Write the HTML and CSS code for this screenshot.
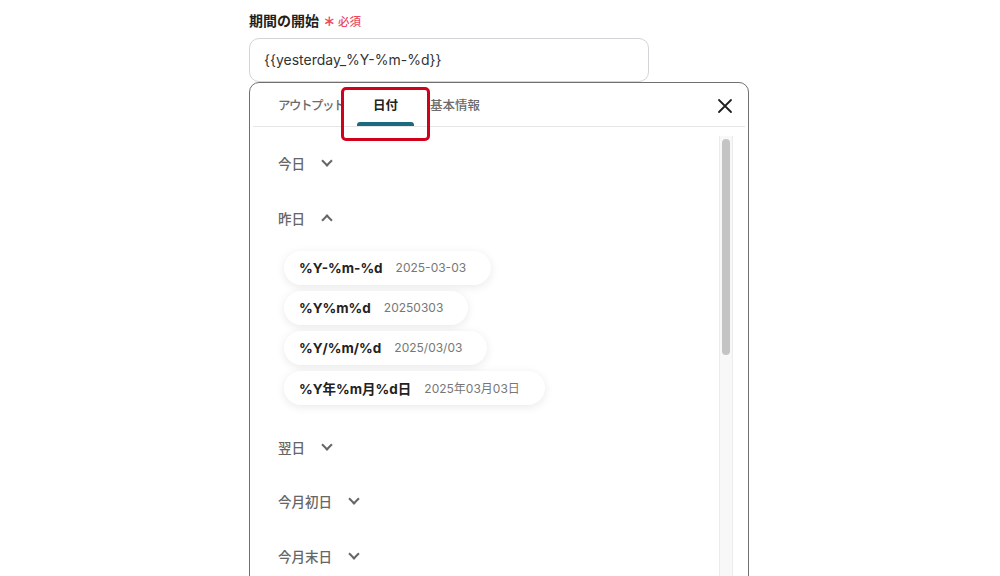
FILE: index.html
```html
<!DOCTYPE html>
<html lang="ja">
<head>
	<meta charset="UTF-8">
	<title>期間の開始</title>
	<link rel="stylesheet" href="styles.css">
</head>
<body>
	<div class="form">
		<label class="fieldLabel">期間の開始<span class="required"><span class="star">&lowast;</span>必須</span></label>
		<div class="field">
			<div class="fieldInput">{{yesterday_%Y-%m-%d}}</div>

			<div class="picker">
				<div class="pickerHead">
					<ul class="tabs">
						<li class="tab first">アウトプット</li>
						<li class="tab current">日付</li>
						<li class="tab">基本情報</li>
					</ul>
					<button class="closeBtn">
						<svg width="16" height="16" viewBox="0 0 16 16"><path d="M2 2L14 14M14 2L2 14" stroke="#1f1f1f" stroke-width="1.8" stroke-linecap="round"/></svg>
					</button>
				</div>
				<div class="pickerBody">
					<div class="groups">
						<div class="groupHead">今日<i class="chev"></i></div>
						<div class="groupHead">昨日<i class="chev up"></i></div>
						<ul class="chips">
							<li class="chip"><b>%Y-%m-%d</b><span>2025-03-03</span></li>
							<li class="chip"><b>%Y%m%d</b><span>20250303</span></li>
							<li class="chip"><b>%Y/%m/%d</b><span>2025/03/03</span></li>
							<li class="chip"><b>%Y年%m月%d日</b><span>2025年03月03日</span></li>
						</ul>
						<div class="groupHead">翌日<i class="chev"></i></div>
						<div class="groupHead">今月初日<i class="chev"></i></div>
						<div class="groupHead">今月末日<i class="chev"></i></div>
					</div>
					<div class="scrollTrack"><div class="scrollThumb"></div></div>
				</div>
				<!-- 選択中タブの強調枠 -->
				<div class="mark"></div>
			</div>
		</div>
	</div>
</body>
</html>
```

FILE: styles.css
```css
html,body,ul{margin:0;padding:0;}
ul{
	list-style: none;
}
body{
	background-color: #fff;
	font-family: Inter, "Noto Sans CJK JP", sans-serif;
	color: #222;
	overflow: hidden;
	height: 576px;
}
.form{
	width: 400px;
	margin-left: 249px;
	padding-top: 11px;
}
.fieldLabel{
	display: block;
	font-size: 14px;
	font-weight: 700;
	line-height: 20px;
	color: #1f1f1f;
}
.required{
	font-size: 11.5px;
	font-weight: 500;
	color: #e84a5f;
	margin-left: 4px;
}
.star{
	font-size: 15px;
	margin-right: 2px;
}
.field{
	position: relative;
	margin-top: 6px;
}
.fieldInput{
	height: 42px;
	line-height: 42px;
	border: 1px solid #d4d4d8;
	border-radius: 10px;
	padding-left: 14px;
	font-size: 14px;
	color: #333;
}
.picker{
	position: absolute;
	top: 44px;
	left: 0;
	width: 498px;
	height: 520px;
	border: 1px solid #707070;
	border-radius: 10px;
	background: #fff;
	display: flex;
	flex-direction: column;
}
.pickerHead{
	display: flex;
	align-items: stretch;
	justify-content: space-between;
	height: 43px;
	margin: 0 3px;
	padding-left: 9px;
	border-bottom: 1px solid #e6e6e6;
}
.tabs{
	display: flex;
}
.tab{
	position: relative;
	padding: 1px 16px 0;
	font-size: 12.5px;
	line-height: 43px;
	color: #6b6b6b;
	font-weight: 500;
}
.tab.first{
	letter-spacing: -1.5px;
	padding-right: 13px;
}
.tab.current{
	color: #222;
	font-weight: 700;
}
.tab.current::after{
	content: "";
	position: absolute;
	left: 0;
	right: 0;
	bottom: 0;
	height: 4px;
	border-radius: 3px 3px 0 0;
	background: #1c6a80;
}
.closeBtn{
	border: 0;
	background: none;
	padding: 0;
	width: 40px;
	display: flex;
	align-items: center;
	justify-content: center;
	margin-right: 0;
	margin-top: 3px;
}
.pickerBody{
	flex: 1;
	display: flex;
	min-height: 0;
	padding-top: 9px;
}
.groups{
	flex: 1;
	padding-left: 28px;
}
.groupHead{
	display: flex;
	align-items: center;
	height: 54.5px;
	font-size: 13.5px;
	font-weight: 500;
	color: #666;
}
.groupHead:first-child{
	margin-bottom: 0.5px;
}
.chev{
	width: 6px;
	height: 6px;
	border-right: 2px solid #666;
	border-bottom: 2px solid #666;
	transform: rotate(45deg);
	margin: -4px 0 0 18px;
}
.chev.up{
	transform: rotate(-135deg);
	margin-top: 4px;
}
.chips{
	display: flex;
	flex-direction: column;
	align-items: flex-start;
	gap: 6px;
	padding: 5px 0 15px 6px;
}
.chip{
	display: flex;
	align-items: center;
	height: 34px;
	padding: 0 25px 0 15px;
	border-radius: 17px;
	background: #fff;
	box-shadow: 0 2px 10px rgba(0,0,0,0.09);
}
.chip b{
	font-size: 13.5px;
	font-weight: 700;
	color: #222;
}
.chip span{
	font-size: 12px;
	color: #777;
	margin-left: 13px;
}
.scrollTrack{
	width: 12px;
	margin-right: 15px;
	background: #f8f8f8;
	border-left: 1px solid #ececec;
	border-right: 1px solid #ececec;
	padding-top: 3px;
}
.scrollThumb{
	width: 8px;
	height: 216px;
	margin: 0 auto;
	border-radius: 4px;
	background: #c4c4c4;
}
.mark{
	position: absolute;
	left: 91px;
	top: 4px;
	width: 83px;
	height: 48px;
	border: 3px solid #d0021b;
	border-radius: 5px;
}
```
